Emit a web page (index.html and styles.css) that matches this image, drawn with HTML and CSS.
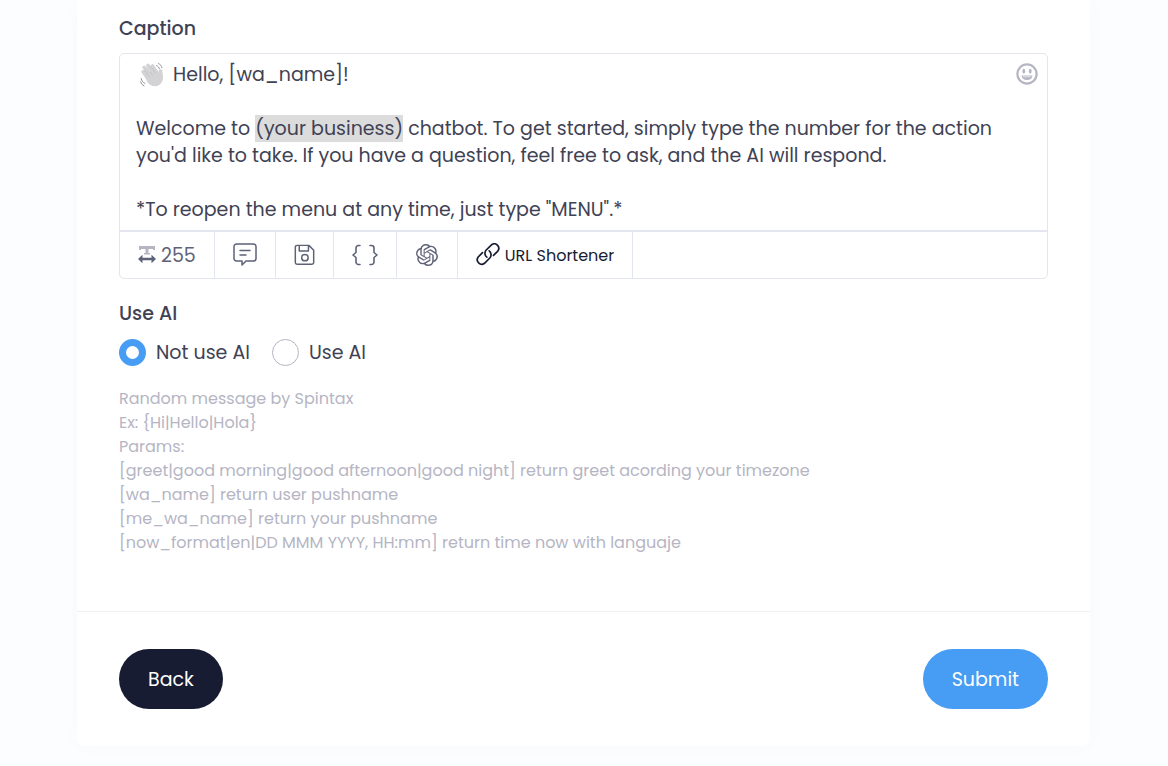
FILE: index.html
```html
<!DOCTYPE html>
<html lang="en">
<head>
    <meta charset="UTF-8">
    <meta name="viewport" content="width=device-width, initial-scale=1.0">
    <title>Chatbot</title>
    <link rel="stylesheet" href="styles.css">
</head>
<body>
<form class="card">
    <div class="card-body">
        <h2 class="label" id="caption-label">Caption</h2>
        <div class="editor">
            <div class="editor-area">
                <div class="editor-text" contenteditable="true" spellcheck="false" role="textbox" aria-multiline="true" aria-labelledby="caption-label"><p><svg class="wave" viewBox="0 0 24 24" role="img" aria-label="waving hand"><g fill="none" stroke="#d3d3d6" stroke-width="3.600" stroke-linecap="round"><path d="M3.200 8.800l6 8M4.200 4.500l7 9M8 2.500l6.500 9M12.500 3l6 9"/></g><path fill="#d3d3d6" d="M4 12.500L15 6.500l3 4.500c.6-1.500.3-3.200 1.400-4.200 1.200-1.100 3.200-.4 3 1.400-.2 2.500.9 4 .6 7.300-.4 4.500-3.800 7.700-8.200 7.700-3.500 0-5.600-1.800-7.300-4.200z"/><path fill="none" stroke="#b8b8bd" stroke-width=".6" stroke-linecap="round" d="M4.700 7.700l4.600 6.200M6.800 4.600l5.500 7.300M10.700 3.700l4.800 6.600"/><path fill="none" stroke="#85858f" stroke-width=".9" stroke-linecap="round" d="M16.500 2.500c1.500.7 2.400 1.700 2.900 3.300M18.500.6c2 .8 3 2.200 3.500 4.200M1.200 15.500c.3 2.300 1.700 4 3.700 4.900M.6 18.800c.5 1.900 1.700 3.300 3.400 4"/></svg> Hello, [wa_name]!</p><p><br></p><p>Welcome to <mark>(your business)</mark> chatbot. To get started, simply type the number for the action you'd like to take. If you have a question, feel free to ask, and the AI will respond.</p><p><br></p><p>*To reopen the menu at any time, just type "MENU".*</p></div>
                <button type="button" class="emoji-btn" aria-label="Emoji">
                    <svg viewBox="0 0 24 24"><circle cx="12" cy="12" r="10.500" fill="none" stroke="currentColor" stroke-width="2.400"/><ellipse cx="8.500" cy="9" rx="1.500" ry="2.700" fill="currentColor"/><ellipse cx="15.500" cy="9" rx="1.500" ry="2.700" fill="currentColor"/><path fill="currentColor" d="M6 13.500h12c-.3 3.300-2.800 5-6 5s-5.700-1.700-6-5z"/><path stroke="#fff" stroke-width=".7" d="M7.500 15h9"/></svg>
                </button>
            </div>
            <div class="toolbar">
                <div class="tool counter">
                    <svg viewBox="0 0 18 18"><path fill="#b5b5c3" d="M1 0h16v4h-2V3h-4.500v4H12v1.500H6V7h1.500V3H3v1H1z"/><path fill="#5e6278" d="M0 13l4.500-4.200v3h9v-3L18 13l-4.500 4.200v-3h-9v3z"/></svg>
                    <span>255</span>
                </div>
                <button type="button" class="tool" aria-label="Saved messages">
                    <svg viewBox="0 0 24 24" fill="none" stroke="currentColor" stroke-width="1.500" stroke-linecap="round" stroke-linejoin="round"><path d="M3.500 1h17A2.500 2.500 0 0 1 23 3.500v12a2.500 2.500 0 0 1-2.500 2.500H13l-4 4v-4H3.500A2.500 2.500 0 0 1 1 15.500v-12A2.500 2.500 0 0 1 3.500 1zM7 7.500h10M7 12h6"/></svg>
                </button>
                <button type="button" class="tool save" aria-label="Save">
                    <svg viewBox="0 0 24 24" fill="none" stroke="currentColor" stroke-width="1.700" stroke-linejoin="round"><path d="M4 1h13l5.500 5.500V20.500a2 2 0 0 1-2 2H3.500a2 2 0 0 1-2-2V3a2 2 0 0 1 2-2zM6 1v6.500h10.500V1"/><circle cx="12.500" cy="15" r="3.700"/></svg>
                </button>
                <button type="button" class="tool params" aria-label="Params">
                    <svg viewBox="0 0 26 24" fill="none" stroke="currentColor" stroke-width="1.600" stroke-linecap="round" stroke-linejoin="round"><path d="M8 2.500H6.500a2.500 2.500 0 0 0-2.500 2.500v4.500L1 12l3 2.500V19a2.500 2.500 0 0 0 2.500 2.500H8M18 2.500h1.500A2.500 2.500 0 0 1 22 5v4.500l3 2.500-3 2.500V19a2.500 2.500 0 0 1-2.500 2.500H18"/></svg>
                </button>
                <button type="button" class="tool" aria-label="OpenAI">
                    <svg class="openai" viewBox="0 0 24 24" fill="currentColor"><path d="M22.2819 9.8211a5.9847 5.9847 0 0 0-.5157-4.9108 6.0462 6.0462 0 0 0-6.5098-2.9A6.0651 6.0651 0 0 0 4.9807 4.1818a5.9847 5.9847 0 0 0-3.9977 2.9 6.0462 6.0462 0 0 0 .7427 7.0966 5.98 5.98 0 0 0 .511 4.9107 6.051 6.051 0 0 0 6.5146 2.9001A5.9847 5.9847 0 0 0 13.2599 24a6.0557 6.0557 0 0 0 5.7718-4.2058 5.9894 5.9894 0 0 0 3.9977-2.9001 6.0557 6.0557 0 0 0-.7475-7.0729zm-9.022 12.6081a4.4755 4.4755 0 0 1-2.8764-1.0408l.1419-.0804 4.7783-2.7582a.7948.7948 0 0 0 .3927-.6813v-6.7369l2.02 1.1686a.071.071 0 0 1 .038.052v5.5826a4.504 4.504 0 0 1-4.4945 4.4944zm-9.6607-4.1254a4.4708 4.4708 0 0 1-.5346-3.0137l.142.0852 4.783 2.7582a.7712.7712 0 0 0 .7806 0l5.8428-3.3685v2.3324a.0804.0804 0 0 1-.0332.0615L9.74 19.9502a4.4992 4.4992 0 0 1-6.1408-1.6464zM2.3408 7.8956a4.485 4.485 0 0 1 2.3655-1.9728V11.6a.7664.7664 0 0 0 .3879.6765l5.8144 3.3543-2.0201 1.1685a.0757.0757 0 0 1-.071 0l-4.8303-2.7865A4.504 4.504 0 0 1 2.3408 7.872zm16.5963 3.8558L13.1038 8.364 15.1192 7.2a.0757.0757 0 0 1 .071 0l4.8303 2.7913a4.4944 4.4944 0 0 1-.6765 8.1042v-5.6772a.79.79 0 0 0-.407-.667zm2.0107-3.0231l-.142-.0852-4.7735-2.7818a.7759.7759 0 0 0-.7854 0L9.409 9.2297V6.8974a.0662.0662 0 0 1 .0284-.0615l4.8303-2.7866a4.4992 4.4992 0 0 1 6.6802 4.66zM8.3065 12.863l-2.02-1.1638a.0804.0804 0 0 1-.038-.0567V6.0742a4.4992 4.4992 0 0 1 7.3757-3.4537l-.142.0805L8.704 5.459a.7948.7948 0 0 0-.3927.6813zm1.0976-2.3654l2.602-1.4998 2.6069 1.4998v2.9994l-2.5974 1.4997-2.6067-1.4997Z"/></svg>
                </button>
                <button type="button" class="tool url">
                    <svg viewBox="0 0 24 24" fill="none" stroke="currentColor" stroke-width="1.700" stroke-linecap="round"><path d="M10.800 14.200A5 5 0 0 1 10.200 7l5.300-5.200a4.500 4.500 0 0 1 6.300 6.300l-4.300 4.300M13.200 7.800a5 5 0 0 1 .6 7.200l-5.300 5.300A4.500 4.500 0 0 1 2.200 14l4.300-4.300"/></svg>
                    URL Shortener
                </button>
            </div>
        </div>

        <fieldset class="use-ai">
            <legend class="label">Use AI</legend>
            <label class="radio"><input type="radio" name="ai" value="0" checked>Not use AI</label>
            <label class="radio"><input type="radio" name="ai" value="1">Use AI</label>
        </fieldset>

        <ul class="help">
            <li>Random message by Spintax</li>
            <li>Ex: {Hi|Hello|Hola}</li>
            <li>Params:</li>
            <li>[greet|good morning|good afternoon|good night] return greet acording your timezone</li>
            <li>[wa_name] return user pushname</li>
            <li>[me_wa_name] return your pushname</li>
            <li>[now_format|en|DD MMM YYYY, HH:mm] return time now with languaje</li>
        </ul>
    </div>
    <div class="card-footer">
        <button type="button" class="btn btn-dark">Back</button>
        <button type="submit" class="btn btn-primary">Submit</button>
    </div>
</form>
</body>
</html>
```
FILE: styles.css
```css
*{
    box-sizing: border-box;
}
body{
    margin: 0;
    padding: 0 78px 20px 77px;
    background-color: #fcfdff;
    color: #3f4254;
    font-family: Poppins, Inter, sans-serif;
    font-size: 19px;
    line-height: 27px;
}
button{
    font: inherit;
    color: inherit;
    cursor: pointer;
}
.card{
    background-color: #fff;
    border-radius: 0 0 8px 8px;
    box-shadow: 0 0 30px rgba(82, 63, 105, 0.02);
}
.card-body{
    padding: 15px 42px 56px;
}
.label{
    margin: 0;
    padding: 0;
    font-size: 19px;
    font-weight: 500;
}
/* Editor */
.editor{
    margin-top: 11px;
    border: 1px solid #e4e6ef;
    border-radius: 5px;
}
.editor-area{
    position: relative;
}
.editor-text{
    padding: 7px 40px 7px 16px;
    outline: none;
}
.editor-text p{
    margin: 0;
}
.editor-text mark{
    background-color: #dcdcdc;
    color: inherit;
}
.wave{
    width: 24px;
    height: 24px;
    margin: 0 4px;
    vertical-align: -6px;
}
.emoji-btn{
    position: absolute;
    top: 9px;
    right: 9px;
    width: 22px;
    height: 22px;
    padding: 0;
    border: 0;
    background: none;
    color: #b5b5c3;
}
.emoji-btn svg{
    display: block;
}
.toolbar{
    display: flex;
    height: 48px;
    border-top: 2px solid #e4e6ef;
}
.tool{
    display: flex;
    align-items: center;
    gap: 5px;
    padding: 0 18px;
    border: 0;
    border-right: 1px solid #e4e6ef;
    background: none;
    color: #5e6278;
}
.tool svg{
    width: 24px;
    height: 24px;
}
.tool.counter svg{
    width: 18px;
    height: 18px;
}
.tool.save svg{
    width: 21px;
}
.tool.params svg{
    width: 26px;
}
.tool .openai{
    width: 24px;
    height: 22px;
}
.tool.url{
    color: #181c32;
    font-size: 16px;
}
/* Radios */
.use-ai{
    display: flex;
    gap: 22px;
    margin: 21px 0 0;
    padding: 0;
    border: 0;
}
.use-ai .label{
    margin-bottom: 12px;
}
.radio{
    display: flex;
    align-items: center;
    gap: 10px;
}
.radio input{
    appearance: none;
    width: 27px;
    height: 27px;
    margin: 0;
    border: 1px solid #b5b5c3;
    border-radius: 50%;
    background-color: #fff;
}
.radio input:checked{
    border: 7px solid #479cf3;
}
.help{
    margin: 21px 0 0;
    padding: 0;
    list-style: none;
    color: #b5b5c3;
    font-size: 16px;
    line-height: 24px;
}
/* Footer */
.card-footer{
    display: flex;
    justify-content: space-between;
    padding: 37px 42px;
    border-top: 1px solid #f1f1f4;
}
.btn{
    height: 60px;
    padding: 0 29px;
    border: 0;
    border-radius: 30px;
    color: #fff;
}
.btn-dark{
    background-color: #181c32;
}
.btn-primary{
    background-color: #479cf3;
}
```
